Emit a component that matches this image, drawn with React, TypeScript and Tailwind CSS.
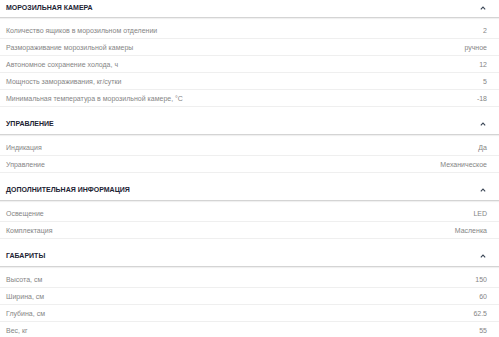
import React from 'react';

type Row = { label: string; value: string };
type Group = { title: string; rows: Row[] };

const groups: Group[] = [
  {
    title: 'МОРОЗИЛЬНАЯ КАМЕРА',
    rows: [
      { label: 'Количество ящиков в морозильном отделении', value: '2' },
      { label: 'Размораживание морозильной камеры', value: 'ручное' },
      { label: 'Автономное сохранение холода, ч', value: '12' },
      { label: 'Мощность замораживания, кг/сутки', value: '5' },
      { label: 'Минимальная температура в морозильной камере, °C', value: '-18' },
    ],
  },
  {
    title: 'УПРАВЛЕНИЕ',
    rows: [
      { label: 'Индикация', value: 'Да' },
      { label: 'Управление', value: 'Механическое' },
    ],
  },
  {
    title: 'ДОПОЛНИТЕЛЬНАЯ ИНФОРМАЦИЯ',
    rows: [
      { label: 'Освещение', value: 'LED' },
      { label: 'Комплектация', value: 'Масленка' },
    ],
  },
  {
    title: 'ГАБАРИТЫ',
    rows: [
      { label: 'Высота, см', value: '150' },
      { label: 'Ширина, см', value: '60' },
      { label: 'Глубина, см', value: '62.5' },
      { label: 'Вес, кг', value: '55' },
    ],
  },
];

const Chevron: React.FC = () => (
  <svg width="6" height="4" viewBox="0 0 6 4" className="text-[#3b4656]">
    <polyline points="0.8,3.3 3,1 5.2,3.3" fill="none" stroke="currentColor" strokeWidth="1.1" />
  </svg>
);

const Section: React.FC<{ group: Group; first?: boolean }> = ({ group, first }) => (
  <div>
    <div
      className={`flex items-center justify-between pl-[6px] pr-[13px] border-b border-[#d4d4d4] shadow-[0_1px_1px_rgba(0,0,0,0.06)] ${
        first ? 'pt-[4px] pb-[5px]' : 'pt-[13px] pb-[6px]'
      }`}
    >
      <span className="text-[7px] leading-[8px] font-bold text-[#1d2433]">{group.title}</span>
      <Chevron />
    </div>
    <div className="mt-[4px]">
      {group.rows.map((row) => (
        <div
          key={row.label}
          className="flex items-center justify-between h-[17px] pt-[2px] pl-[6px] pr-[12px] border-b border-[#efefef] text-[7px] text-[#858585]"
        >
          <span>{row.label}</span>
          <span>{row.value}</span>
        </div>
      ))}
    </div>
  </div>
);

export default function App() {
  return (
    <div className="w-[499px] h-[337px] overflow-hidden bg-white font-['Liberation_Sans',Arial,sans-serif]">
      {groups.map((g, i) => (
        <Section key={g.title} group={g} first={i === 0} />
      ))}
    </div>
  );
}
